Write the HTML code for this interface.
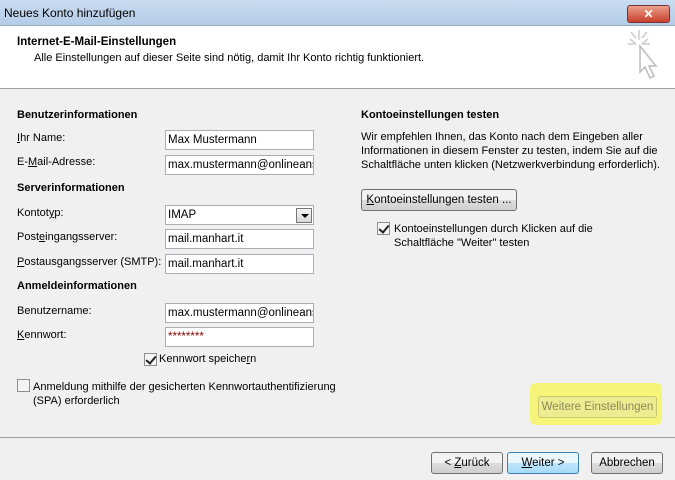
<!DOCTYPE html>
<html><head><meta charset="utf-8"><style>
*{margin:0;padding:0;box-sizing:border-box}
body{width:675px;height:480px;overflow:hidden;background:#f0f0f0;font-family:"Liberation Sans",sans-serif;font-size:11px;color:#000;position:relative}
.a{position:absolute;white-space:nowrap}
.title{left:0;top:0;width:675px;height:26px;background:linear-gradient(#c9dcf0,#b4cce8);border-bottom:1px solid #9ab}
.hdr{left:0;top:26px;width:675px;height:63px;background:#fff;border-bottom:1px solid #a0a0a0}
.b{font-weight:bold}
.inp{position:absolute;left:165px;width:149px;height:20px;background:#fff;border:1px solid #abadb3;padding:3px 0 0 2px;overflow:hidden;white-space:nowrap;font-size:11.5px}
.btn{position:absolute;height:22px;border:1px solid #707070;border-radius:3px;background:linear-gradient(#f2f2f2 50%,#dddddd 50%,#cfcfcf);text-align:center;padding-top:4px;font-size:11.5px}
.cb{position:absolute;width:13px;height:13px;border:1px solid #8f8f8f;background:#f4f4f4}
.cb.on::after{content:"";position:absolute;left:3px;top:0px;width:4px;height:8px;border:solid #222;border-width:0 2px 2px 0;transform:rotate(40deg)}
u{text-decoration:underline}
</style></head><body>
<div class="a title"></div>
<div class="a" style="left:4px;top:6px;font-size:12px">Neues Konto hinzufügen</div>
<div class="a" style="left:627px;top:5px;width:43px;height:18px;border:1px solid #733;border-radius:3px;background:linear-gradient(#e8a08c,#c8402a);color:#fff;font-weight:bold;text-align:center;font-size:12px;line-height:16px">✕</div>
<div class="a hdr"></div>
<div class="a b" style="left:17px;top:36px;font-size:11.5px">Internet-E-Mail-Einstellungen</div>
<div class="a" style="left:34px;top:52px">Alle Einstellungen auf dieser Seite sind nötig, damit Ihr Konto richtig funktioniert.</div>
<svg class="a" style="left:625px;top:28px" width="40" height="52"><g stroke="#ccc" stroke-width="1.5" fill="none"><path d="M14 2v10M5 11l6 5M3 16h8M23 11l-6 5M25 16h-8M6 4l5 6M22 4l-5 6"/><path d="M15 18v26l5-5 5 11 4-2-5-10h7z" fill="#fff" stroke="#bbb"/></g></svg>

<div class="a b" style="left:17px;top:109px">Benutzerinformationen</div>
<div class="a" style="left:17px;top:132px"><u>I</u>hr Name:</div>
<div class="inp" style="top:130px">Max Mustermann</div>
<div class="a" style="left:17px;top:156px">E-<u>M</u>ail-Adresse:</div>
<div class="inp" style="top:155px">max.mustermann@onlineanschluss.de</div>
<div class="a b" style="left:17px;top:182px">Serverinformationen</div>
<div class="a" style="left:17px;top:207px">Kontot<u>y</u>p:</div>
<div class="inp" style="top:205px">IMAP</div>
<div class="a" style="left:296px;top:208px;width:16px;height:15px;border:1px solid #777;background:linear-gradient(#f4f4f4,#d8d8d8)"><div style="position:absolute;left:4px;top:5px;border:4px solid transparent;border-top:4px solid #000;border-bottom:0"></div></div>
<div class="a" style="left:17px;top:231px">Post<u>e</u>ingangsserver:</div>
<div class="inp" style="top:229px">mail.manhart.it</div>
<div class="a" style="left:17px;top:256px"><u>P</u>ostausgangsserver (SMTP):</div>
<div class="inp" style="top:254px">mail.manhart.it</div>
<div class="a b" style="left:17px;top:280px">Anmeldeinformationen</div>
<div class="a" style="left:17px;top:305px">Benutzername:</div>
<div class="inp" style="top:303px">max.mustermann@onlineanschluss.de</div>
<div class="a" style="left:17px;top:329px"><u>K</u>ennwort:</div>
<div class="inp" style="top:327px;color:#800">********</div>
<div class="cb on" style="left:144px;top:353px"></div>
<div class="a" style="left:159px;top:353px">Kennwort speiche<u>r</u>n</div>
<div class="cb" style="left:17px;top:379px"></div>
<div class="a" style="left:33px;top:380px;line-height:14px">Anmeldung mithilfe der gesicherten Kennwortauthentifizierung<br>(SPA) erforderlich</div>

<div class="a b" style="left:361px;top:109px">Kontoeinstellungen testen</div>
<div class="a" style="left:361px;top:130px;line-height:14px">Wir empfehlen Ihnen, das Konto nach dem Eingeben aller<br>Informationen in diesem Fenster zu testen, indem Sie auf die<br>Schaltfläche unten klicken (Netzwerkverbindung erforderlich).</div>
<div class="btn" style="left:361px;top:189px;width:156px"><u>K</u>ontoeinstellungen testen ...</div>
<div class="cb on" style="left:377px;top:222px"></div>
<div class="a" style="left:394px;top:222px;line-height:14px">Kontoeinstellungen durch Klicken auf die<br>Schaltfläche "Weiter" testen</div>

<div class="a" style="left:530px;top:383px;width:132px;height:42px;background:#f6f57a;border-radius:6px"></div>
<div class="btn" style="left:538px;top:396px;width:119px;background:#eeec90;border-color:#c8c870;color:#8a8a5a">Weitere Einstellungen</div>

<div class="a" style="left:0;top:437px;width:675px;height:1px;background:#a0a0a0"></div>
<div class="btn" style="left:431px;top:452px;width:72px">&lt; <u>Z</u>urück</div>
<div class="btn" style="left:507px;top:452px;width:72px;border-color:#3c7fb1;background:linear-gradient(#eaf6fd 50%,#bee6fd 50%,#a7d9f5)"><u>W</u>eiter &gt;</div>
<div class="btn" style="left:591px;top:452px;width:72px">Abbrechen</div>
</body></html>
